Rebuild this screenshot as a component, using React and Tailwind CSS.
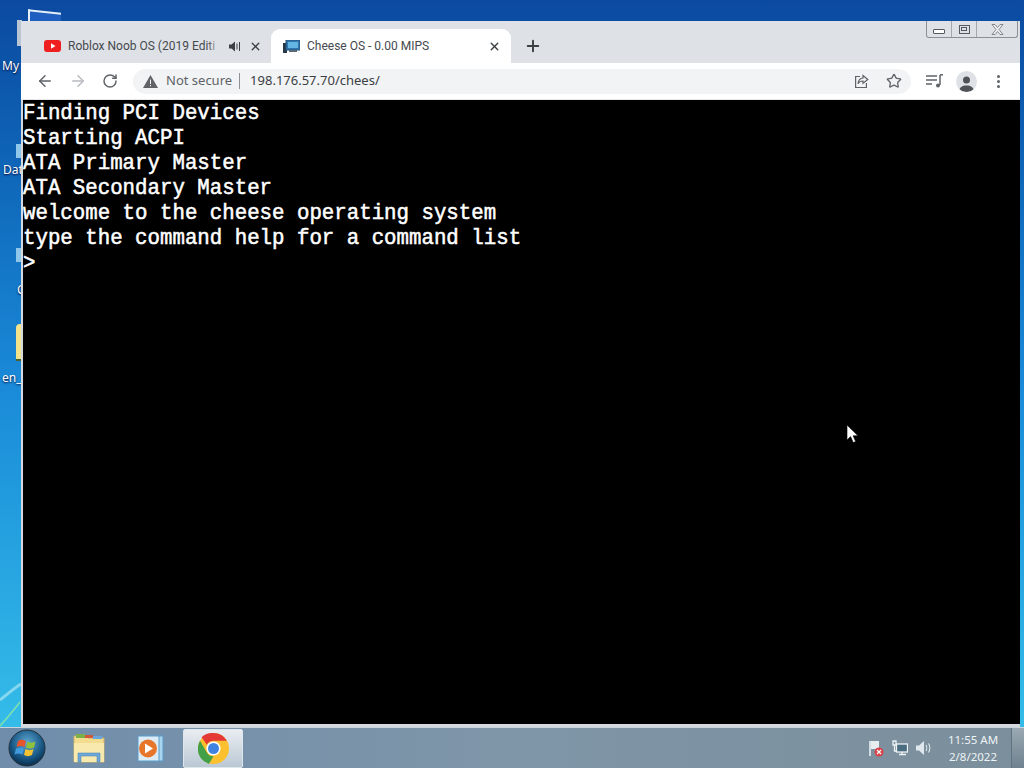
import { ArrowLeft, ArrowRight, Plus, RotateCw, Star, X } from "lucide-react";

const LINES = [
  "Finding PCI Devices",
  "Starting ACPI",
  "ATA Primary Master",
  "ATA Secondary Master",
  "welcome to the cheese operating system",
  "type the command help for a command list",
  ">",
];

function DesktopIcons() {
  return (
    <div className="absolute inset-0 font-['Noto_Sans',sans-serif] text-[12px] text-white">
      <div className="absolute left-[28px] top-[11px] h-[12px] w-[33px] skew-y-6 border-t-2 border-l-2 border-[#e6eef8] bg-[#1f5fc0]" />
      <div className="absolute left-[17px] top-[20px] h-[26px] w-[5px] bg-[#b9c5d2]" />
      <span className="absolute left-[2px] top-[57px] [text-shadow:0_1px_2px_#003]">My</span>
      <div className="absolute left-[16px] top-[144px] h-[14px] w-[5px] bg-[#8ec7ea]" />
      <span className="absolute left-[3px] top-[161px] [text-shadow:0_1px_2px_#003]">Dat</span>
      <div className="absolute left-[16px] top-[248px] h-[14px] w-[5px] bg-[#8ec7ea]" />
      <span className="absolute left-[17px] top-[281px] [text-shadow:0_1px_2px_#003]">C</span>
      <div className="absolute left-[16px] top-[324px] h-[37px] w-[5px] rounded-tl-sm border-b-2 border-[#47602c] bg-[#f3e38a]" />
      <span className="absolute left-[2px] top-[369px] [text-shadow:0_1px_2px_#003]">en_</span>
      <svg className="absolute left-0 top-[640px]" width="21" height="88" viewBox="0 0 21 88" fill="none">
        <path d="M0 60 C8 54 14 48 21 44" stroke="#a9e6f3" strokeWidth="3" opacity="0.7" />
        <path d="M0 86 C7 78 14 70 20 62" stroke="#7fe0b0" strokeWidth="1.5" />
      </svg>
    </div>
  );
}

function YoutubeIcon() {
  return (
    <svg width="17" height="12" viewBox="0 0 17 12">
      <rect width="17" height="12" rx="3" fill="#f01f1f" />
      <path d="M7 3.2 11.5 6 7 8.8z" fill="#fff" />
    </svg>
  );
}

function CheeseIcon() {
  return (
    <svg width="17" height="13" viewBox="0 0 17 13">
      <rect x="0" y="3" width="4" height="10" fill="#26384a" />
      <rect x="3" y="0" width="14" height="10" fill="#2f78b5" stroke="#29506f" />
      <rect x="5" y="2" width="10" height="6" fill="#63b5e2" />
      <rect x="6" y="10" width="8" height="2" fill="#5a6b78" />
    </svg>
  );
}

function SpeakerIcon() {
  return (
    <svg width="12" height="11" viewBox="0 0 12 11" fill="#3c4043">
      <path d="M0 3.5h2.5L6 .5v10L2.5 7.500H0z" />
      <path d="M7.500 2.500h1v6h-1zM10 1h1v9h-1z" />
    </svg>
  );
}

function WindowControls() {
  return (
    <div className="absolute right-[2px] top-0 flex h-[17px] w-[92px] rounded-b-[3px] border border-t-0 border-[#8b9098]">
      <div className="flex w-[25px] items-end justify-center border-r border-[#a5a9af] pb-[3px]">
        <div className="h-[5px] w-[12px] rounded-[1px] border border-[#555a60] bg-white" />
      </div>
      <div className="flex w-[25px] items-center justify-center border-r border-[#a5a9af]">
        <div className="flex h-[9px] w-[11px] items-center justify-center border border-[#555a60]">
          <div className="h-[4px] w-[6px] border border-[#555a60]" />
        </div>
      </div>
      <div className="flex flex-1 items-center justify-center">
        <svg width="13" height="11" viewBox="0 0 13 11" fill="#eceef0" stroke="#6d7278" strokeWidth="0.800">
          <path d="M1 .5h3l2.500 3 2.500-3h3L8 5.500l4 5H9L6.500 7.500 4 10.500H1l4-5z" />
        </svg>
      </div>
    </div>
  );
}

function TabStrip() {
  return (
    <div className="relative flex h-[42px] items-end bg-[#dee1e6] pl-[2px] font-['Roboto',sans-serif] text-[12px] text-[#45494e]">
      <div className="flex h-[34px] w-[248px] items-center pl-[21px]">
        <YoutubeIcon />
        <div className="relative ml-[7px] w-[153px] whitespace-nowrap">
          Roblox Noob OS (2019 Editi
          <div className="absolute inset-y-0 right-0 w-[14px] bg-gradient-to-r from-transparent to-[#dee1e6]" />
        </div>
        <div className="ml-[8px]"><SpeakerIcon /></div>
        <X size={13} strokeWidth={2.500} className="ml-[8px] text-[#3c4043]" />
      </div>
      <div className="flex h-[34px] w-[240px] items-center rounded-t-[9px] bg-white pl-[12px] pr-[10px]">
        <CheeseIcon />
        <span className="ml-[7px] flex-1 whitespace-nowrap">Cheese OS - 0.00 MIPS</span>
        <X size={13} strokeWidth={2.500} className="text-[#3c4043]" />
      </div>
      <div className="flex h-[34px] w-[43px] items-center justify-center">
        <Plus size={18} strokeWidth={2.600} className="text-[#3c4043]" />
      </div>
      <WindowControls />
    </div>
  );
}

function ShareIcon() {
  return (
    <svg width="15" height="15" viewBox="0 0 15 15" fill="none" stroke="#5f6368" strokeWidth="1.200">
      <path d="M6 2.500H1.600v11h10.800V9" />
      <path d="M9 1.500 13.800 5.500 9 9.300V7c-2.300 0-4 .8-5 2.800C4.300 6.600 6 4.300 9 4z" />
    </svg>
  );
}

function MediaIcon() {
  return (
    <svg width="17" height="14" viewBox="0 0 17 14" fill="none" stroke="#5f6368" strokeWidth="1.500">
      <path d="M0 2h11M0 6h11M0 10h6" />
      <path d="M14 1v10" />
      <path d="M14 .800h3" />
      <circle cx="12" cy="11.500" r="2" fill="#5f6368" stroke="none" />
    </svg>
  );
}

function Toolbar() {
  return (
    <div className="flex h-[37px] items-center border-b border-[#e6e8ea] bg-white font-['Noto_Sans',sans-serif] text-[13px]">
      <ArrowLeft size={18} strokeWidth={2} className="ml-[15px] text-[#5f6368]" />
      <ArrowRight size={18} strokeWidth={2} className="ml-[15px] text-[#b8bbbf]" />
      <RotateCw size={16} strokeWidth={2.200} className="ml-[15px] text-[#5f6368]" />
      <div className="ml-[15px] flex h-[25px] w-[778px] items-center rounded-full bg-[#f1f3f4] pl-[10px] pr-[9px]">
        <svg width="15" height="13" viewBox="0 0 15 13">
          <path d="M7.500 0 15 13H0z" fill="#5f6368" />
          <path d="M7 4.500h1V9H7zM7 10h1v1.200H7z" fill="#f1f3f4" />
        </svg>
        <span className="ml-[8px] whitespace-nowrap text-[#5f6368]">Not secure</span>
        <div className="ml-[7px] h-[16px] w-px bg-[#8d9094]" />
        <span className="ml-[10px] flex-1 whitespace-nowrap text-[#3c4043]">198.176.57.70/chees/</span>
        <ShareIcon />
        <Star size={16} strokeWidth={2} className="ml-[17px] text-[#5f6368]" />
      </div>
      <div className="ml-[15px]"><MediaIcon /></div>
      <div className="ml-[13px] flex h-[21px] w-[21px] items-end justify-center overflow-hidden rounded-full bg-[#dee1e6]">
        <svg width="15" height="17" viewBox="0 0 15 17" fill="#4f5357">
          <circle cx="7.500" cy="5" r="3.500" />
          <path d="M0 17c0-5 3.500-6.500 7.500-6.500S15 12 15 17z" />
        </svg>
      </div>
      <div className="ml-[20px] flex flex-col gap-[2px]">
        <div className="h-[3px] w-[3px] rounded-full bg-[#5f6368]" />
        <div className="h-[3px] w-[3px] rounded-full bg-[#5f6368]" />
        <div className="h-[3px] w-[3px] rounded-full bg-[#5f6368]" />
      </div>
    </div>
  );
}

function BrowserWindow() {
  return (
    <div className="relative flex h-[706px] w-[999px] flex-col bg-[#d5d9dd] pl-[2px]">
      <div className="-ml-[2px]">
        <TabStrip />
        <Toolbar />
      </div>
      <div className="flex-1 whitespace-pre bg-black pt-[2px] font-['Liberation_Mono',monospace] text-[20.750px] leading-[25px] text-white [-webkit-text-stroke:0.5px_white]">
        {LINES.map((line) => (
          <div key={line} className="h-[25px] origin-bottom scale-y-110">{line}</div>
        ))}
      </div>
      <div className="h-[3px] bg-[#d5d9dd]" />
      <svg className="absolute left-[825px] top-[403px]" width="13" height="20" viewBox="0 0 13 20">
        <path d="M1 1v15l3.600-3.400 2.600 6 2.500-1-2.600-5.800H12z" fill="#fff" stroke="#000" strokeWidth="0.600" />
      </svg>
    </div>
  );
}

function StartOrb() {
  return (
    <svg width="38" height="38" viewBox="0 0 38 38">
      <defs>
        <radialGradient id="orb" cx="50%" cy="35%" r="65%">
          <stop offset="0%" stopColor="#5fa8d4" />
          <stop offset="70%" stopColor="#15527f" />
          <stop offset="100%" stopColor="#0a2c4a" />
        </radialGradient>
      </defs>
      <circle cx="19" cy="19" r="18" fill="url(#orb)" stroke="#23303a" />
      <path d="M10 12c3-2 5-1.500 8 0l-1.500 6c-3-1.500-5-1.500-8 0z" fill="#e6552c" />
      <path d="M19.500 12.500c3 1.500 5 1.500 8 0L26 18.500c-3 1.500-5 1.500-8 0z" fill="#8fc23c" />
      <path d="M8 19.500c3-1.500 5-1.500 8 0l-1.500 6c-3-1.500-5-1.500-8 0z" fill="#3f9bdc" />
      <path d="M17.500 20c3 1.500 5 1.500 8 0L24 26c-3 1.500-5 1.500-8 0z" fill="#f2c230" />
    </svg>
  );
}

function FolderIcon() {
  return (
    <svg width="32" height="30" viewBox="0 0 32 30">
      <path d="M1 3h12l2 2h16v24H1z" fill="#f3dc8e" stroke="#c9b26a" />
      <rect x="3" y="1" width="9" height="4" fill="#7cae4a" />
      <rect x="12" y="2" width="8" height="3" fill="#d0563c" />
      <rect x="20" y="3" width="9" height="3" fill="#6aa6dc" />
      <path d="M1 10h30v19H1z" fill="#f8e9ae" />
      <path d="M5 29v-9h22v9h-3v-6H8v6z" fill="#6fa8d8" stroke="#3f7eb4" strokeWidth="0.500" />
    </svg>
  );
}

function MediaPlayerIcon() {
  return (
    <svg width="27" height="27" viewBox="0 0 27 27">
      <rect x="5" y="1" width="21" height="25" fill="#a9d4ee" stroke="#5b9bc9" />
      <rect x="1" y="1" width="21" height="25" fill="#dcebf4" stroke="#5b9bc9" />
      <circle cx="11" cy="13.500" r="9" fill="#e8762a" />
      <path d="M8 8.500 16 13.500 8 18.500z" fill="#fff" />
    </svg>
  );
}

function ChromeIcon() {
  return (
    <svg width="31" height="31" viewBox="0 0 48 48">
      <circle cx="24" cy="24" r="24" fill="#fbc02d" />
      <path d="M24 0a24 24 0 0 1 20.800 12H24a12 12 0 0 0-10.400 6L5.600 6.500A24 24 0 0 1 24 0z" fill="#e53935" />
      <path d="M3.200 12 13.600 30a12 12 0 0 0 10.400 6l-7 11.500A24 24 0 0 1 3.200 12z" fill="#43a047" />
      <circle cx="24" cy="24" r="11" fill="#fff" />
      <circle cx="24" cy="24" r="8.500" fill="#3f82e0" />
    </svg>
  );
}

function Taskbar() {
  return (
    <div className="flex h-[41px] items-center border-t border-[#c9d4dc] bg-gradient-to-r from-[#6f8dab] via-[#7f96a8] to-[#7b8e9b]">
      <div className="ml-[7px] flex w-[40px] justify-center"><StartOrb /></div>
      <div className="ml-[24px] flex w-[36px] justify-center"><FolderIcon /></div>
      <div className="ml-[25px] flex w-[36px] justify-center"><MediaPlayerIcon /></div>
      <div className="ml-[15px] flex h-[39px] w-[60px] items-center justify-center rounded-[2px] border border-[#dfe6eb] bg-gradient-to-b from-[#e9edf1] to-[#bac8d4]">
        <ChromeIcon />
      </div>
      <div className="flex-1" />
      <div className="flex items-center gap-[8px]">
        <svg width="16" height="17" viewBox="0 0 16 17">
          <path d="M2 1v15" stroke="#f2f5f7" strokeWidth="1.500" />
          <path d="M3 1h8v8H3z" fill="#e8edf0" />
          <circle cx="11" cy="12" r="4.500" fill="#d9434a" />
          <path d="m9 10 4 4m0-4-4 4" stroke="#fff" strokeWidth="1.200" />
        </svg>
        <svg width="16" height="16" viewBox="0 0 16 16" fill="none" stroke="#eef2f5" strokeWidth="1.300">
          <rect x="4.500" y="4" width="11" height="8" fill="#4a6c80" />
          <path d="M7 14.500h7M10 12v2.500" />
          <path d="M1 1h3v4H1zM2.500 5v6h2" />
        </svg>
        <svg width="16" height="14" viewBox="0 0 16 14" fill="none">
          <path d="M0 4.500h3L8 0v14L3 9.500H0z" fill="#dfe7ec" />
          <path d="M10 4c1 1.500 1 4.500 0 6M12.500 2.500c1.800 2.500 1.800 6.500 0 9" stroke="#dfe7ec" strokeWidth="1.100" />
        </svg>
      </div>
      <div className="ml-[12px] flex w-[58px] flex-col items-center font-['Noto_Sans',sans-serif] text-[11.500px] leading-[17px] text-[#eef3f6]">
        <span className="whitespace-nowrap">11:55 AM</span>
        <span>2/8/2022</span>
      </div>
      <div className="ml-[9px] h-full w-[13px] border-l border-[#5f7381] bg-gradient-to-b from-[#9aa9b3] to-[#6f828f]" />
    </div>
  );
}

export default function App() {
  return (
    <div className="relative flex h-[768px] w-[1024px] flex-col overflow-hidden bg-gradient-to-b from-[#0b4aa0] via-[#1a8ad8] to-[#38c2ea]">
      <DesktopIcons />
      <div className="relative flex-1 pl-[21px] pt-[21px]">
        <BrowserWindow />
      </div>
      <Taskbar />
    </div>
  );
}
